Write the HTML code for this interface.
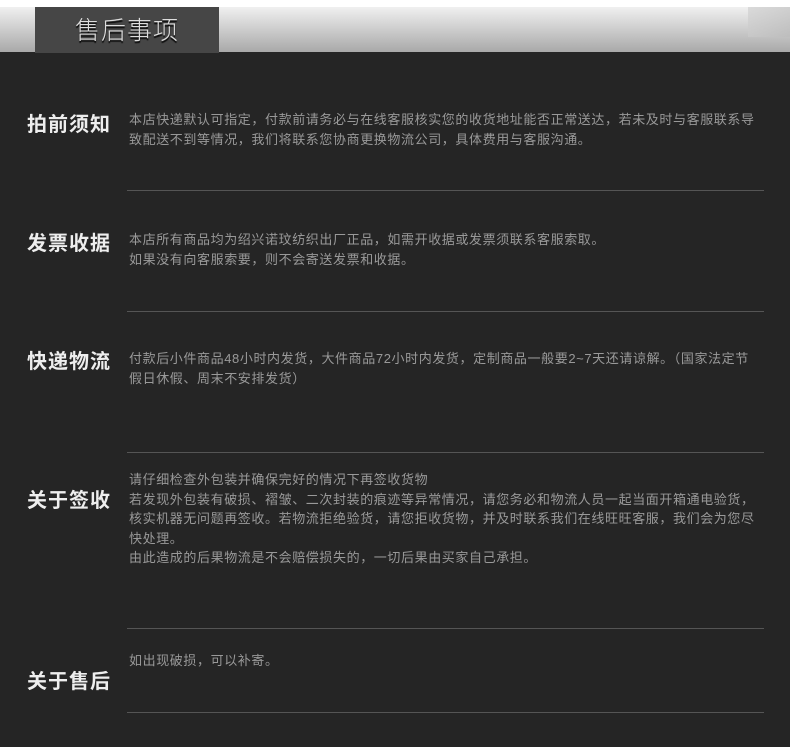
<!DOCTYPE html>
<html><head><meta charset="utf-8"><style>
body{margin:0;width:790px;height:747px;background:#252525;position:relative;overflow:hidden;font-family:"Liberation Sans","Noto Sans CJK SC",sans-serif}
.top{position:absolute;left:0;top:0;width:790px;height:7px;background:#fff}
.bar{position:absolute;left:0;top:7px;width:790px;height:45px;background:linear-gradient(#f0f0f0,#a9a9a9)}
.tab{position:absolute;left:35px;top:7px;width:184px;height:46px;background:#464646;color:#ddd;font-size:25px;line-height:48px;text-align:center;letter-spacing:1px;font-weight:300;text-shadow:0 2px 1px #000}
.h{position:absolute;left:27px;color:#eee;font-weight:bold;font-size:20px;letter-spacing:1px;line-height:24px}
.t{position:absolute;left:129px;width:636px;color:#999;font-size:13px;letter-spacing:0.6px;line-height:19.5px}
.l{position:absolute;left:127px;width:637px;height:1px;background:#555}
</style></head><body>
<div class="top"></div><div class="bar"></div>
<div style="position:absolute;left:748px;top:7px;width:42px;height:30px;background:linear-gradient(90deg,#ccc,#bbb);opacity:.6"></div>
<div class="tab">售后事项</div>

<div class="h" style="top:113px">拍前须知</div>
<div class="t" style="top:110px">本店快递默认可指定，付款前请务必与在线客服核实您的收货地址能否正常送达，若未及时与客服联系导<br>致配送不到等情况，我们将联系您协商更换物流公司，具体费用与客服沟通。</div>
<div class="l" style="top:190px"></div>

<div class="h" style="top:232px">发票收据</div>
<div class="t" style="top:230px">本店所有商品均为绍兴诺玟纺织出厂正品，如需开收据或发票须联系客服索取。<br>如果没有向客服索要，则不会寄送发票和收据。</div>
<div class="l" style="top:311px"></div>

<div class="h" style="top:350px">快递物流</div>
<div class="t" style="top:349px">付款后小件商品48小时内发货，大件商品72小时内发货，定制商品一般要2~7天还请谅解。（国家法定节<br>假日休假、周末不安排发货）</div>
<div class="l" style="top:452px"></div>

<div class="h" style="top:489px">关于签收</div>
<div class="t" style="top:470px">请仔细检查外包装并确保完好的情况下再签收货物<br>若发现外包装有破损、褶皱、二次封装的痕迹等异常情况，请您务必和物流人员一起当面开箱通电验货，<br>核实机器无问题再签收。若物流拒绝验货，请您拒收货物，并及时联系我们在线旺旺客服，我们会为您尽<br>快处理。<br>由此造成的后果物流是不会赔偿损失的，一切后果由买家自己承担。</div>
<div class="l" style="top:628px"></div>

<div class="h" style="top:670px">关于售后</div>
<div class="t" style="top:651px">如出现破损，可以补寄。</div>
<div class="l" style="top:712px"></div>
</body></html>
